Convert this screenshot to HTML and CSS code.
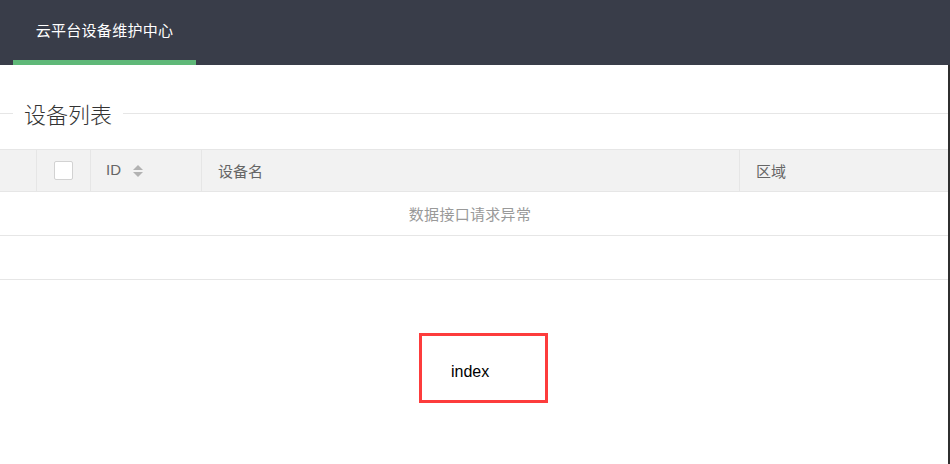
FILE: index.html
```html
<!DOCTYPE html>
<html lang="zh-CN">
<head>
<meta charset="utf-8">
<title>云平台设备维护中心</title>
<link rel="stylesheet" href="styles.css">
</head>
<body>
<div class="header">
  <ul class="nav">
    <li class="nav-item active">云平台设备维护中心</li>
  </ul>
</div>
<div class="main">
  <div class="field-title">
    <span class="line line-left"></span>
    <span class="legend">设备列表</span>
    <span class="line line-right"></span>
  </div>
  <div class="table">
    <div class="thead">
      <div class="cell cell-num"></div>
      <div class="cell cell-check"><span class="checkbox"></span></div>
      <div class="cell cell-id"><span class="id-text">ID</span><svg class="sort" width="10" height="12" viewBox="0 0 10 12"><polygon points="5,0 10,5 0,5" fill="#b2b2b2"/><polygon points="0,7 10,7 5,12" fill="#b2b2b2"/></svg></div>
      <div class="cell cell-name">设备名</div>
      <div class="cell cell-area">区域</div>
    </div>
    <div class="tbody">
      <div class="empty">数据接口请求异常</div>
      <div class="blank"></div>
    </div>
  </div>
  <div class="index-box">index</div>
</div>
</body>
</html>
```
FILE: styles.css
```css
* {
  box-sizing: border-box;
}
html, body {
  margin: 0;
  padding: 0;
  background: #fff;
}
body {
  width: 950px;
  height: 464px;
  overflow: hidden;
  font-family: "Liberation Sans", "Noto Sans CJK SC", sans-serif;
  color: #333;
}
.header {
  height: 65px;
  background: #393d49;
}
.nav {
  list-style: none;
  margin: 0;
  padding: 0 0 0 13px;
  display: flex;
}
.nav-item {
  width: 183px;
  height: 65px;
  line-height: 60px;
  text-align: center;
  color: #fff;
  font-size: 15px;
  letter-spacing: 0.3px;
  font-family: "Noto Sans CJK SC", sans-serif;
}
.nav-item.active {
  border-bottom: 5px solid #5fb878;
}
.main {
  width: 950px;
  height: 399px;
  border-right: 2px solid #2f2f2f;
  display: flex;
  flex-direction: column;
}
.field-title {
  margin-top: 33px;
  height: 30px;
  display: flex;
  align-items: center;
}
.line {
  height: 1px;
  background: #e6e6e6;
}
.line-left {
  width: 13px;
}
.line-right {
  flex: 1;
}
.legend {
  padding: 0 11px;
  font-size: 22px;
  line-height: 30px;
  color: #333;
  font-weight: 300;
  font-family: "Noto Sans CJK SC", sans-serif;
}
.table {
  margin-top: 21px;
}
.thead {
  display: grid;
  grid-template-columns: 37px 54px 111px 538px 1fr;
  height: 43px;
  background: #f2f2f2;
  border-top: 1px solid #e6e6e6;
  border-bottom: 1px solid #e6e6e6;
}
.cell {
  border-right: 1px solid #e6e6e6;
  display: flex;
  align-items: center;
  padding-left: 16px;
  padding-bottom: 1px;
  font-size: 15px;
  color: #666;
  font-family: "Noto Sans CJK SC", sans-serif;
}
.cell-area {
  border-right: none;
}
.cell-num {
  padding: 0;
}
.cell-check {
  padding: 0 0 0 17px;
}
.cell-id {
  padding-left: 15px;
  font-family: "Liberation Sans", sans-serif;
}
.id-text {
  line-height: 20px;
}
.sort {
  margin-left: 12px;
  margin-top: 2px;
}
.checkbox {
  display: block;
  width: 19px;
  height: 19px;
  background: #fff;
  border: 1px solid #d2d2d2;
  border-radius: 2px;
}
.empty {
  height: 44px;
  border-bottom: 1px solid #e6e6e6;
  display: flex;
  align-items: center;
  justify-content: center;
  padding-right: 8px;
  font-size: 15px;
  letter-spacing: 0.3px;
  color: #999;
  font-family: "Noto Sans CJK SC", sans-serif;
}
.blank {
  height: 44px;
  border-bottom: 1px solid #e6e6e6;
}
.index-box {
  margin-top: 53px;
  margin-left: 419px;
  width: 129px;
  height: 70px;
  border: 3px solid #fd3c3c;
  padding: 27px 0 0 29px;
  font-size: 16px;
  line-height: 18px;
  color: #000;
  font-family: "Liberation Sans", sans-serif;
}
```
